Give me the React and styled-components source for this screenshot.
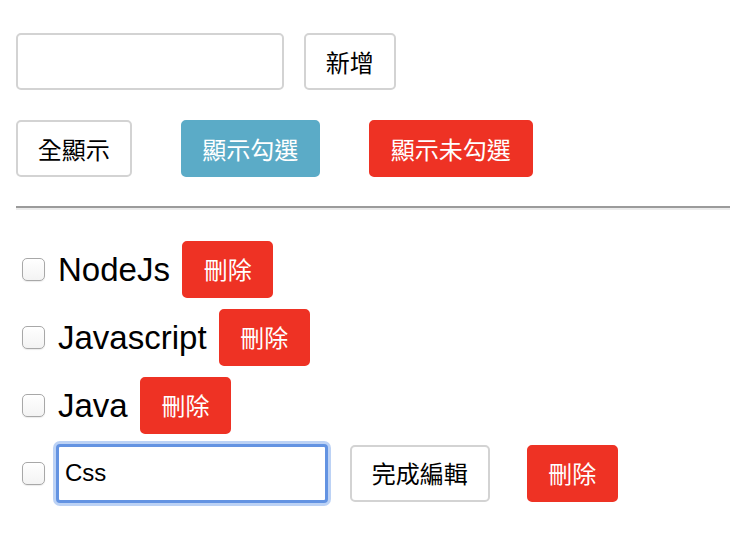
import React, {useState} from 'react'
import styled, {createGlobalStyle} from 'styled-components'

const GlobalStyle = createGlobalStyle`
  body {
    margin: 0;
    background: #fff;
    font-family: "Liberation Sans", "Noto Sans CJK TC", sans-serif;
    color: #000;
  }
`

const Page = styled.div`
  padding: 33px 0 40px 16px;
`

const Toolbar = styled.div`
  display: flex;
  align-items: center;
  gap: ${(p) => p.gap}px;
  margin-bottom: ${(p) => p.mb || 0}px;
`

const TextInput = styled.input`
  box-sizing: border-box;
  width: 268px;
  height: 57px;
  border: 2px solid #d3d3d3;
  border-radius: 5px;
  padding: 0 8px;
  font-size: 24px;
  font-family: "Liberation Sans", "Noto Sans CJK TC", sans-serif;
  outline: none;
`

const EditInput = styled(TextInput)`
  width: 272px;
  height: 59px;
  border: 3px solid #6393e2;
  border-radius: 4px;
  box-shadow: 0 0 0 3px #bcd2f5;
  padding: 0 6px;
  margin-left: 11px;
`

const colors = {
  plain: {bg: '#fff', fg: '#000', border: '#d3d3d3'},
  info: {bg: '#5babc7', fg: '#fff', border: '#5babc7'},
  danger: {bg: '#ee3224', fg: '#fff', border: '#ee3224'},
}

const Button = styled.button`
  box-sizing: border-box;
  height: 57px;
  padding: 0 19.75px;
  border: 2px solid ${(p) => colors[p.kind || 'plain'].border};
  border-radius: 5px;
  background: ${(p) => colors[p.kind || 'plain'].bg};
  color: ${(p) => colors[p.kind || 'plain'].fg};
  font-size: 24px;
  font-family: "Noto Sans CJK TC", sans-serif;
  line-height: 1;
  cursor: pointer;
  margin-left: ${(p) => p.ml || 0}px;
  flex-shrink: 0;
`

const Divider = styled.div`
  height: 2px;
  border-top: 2px solid #9b9b9b;
  background: #ececec;
  margin: 29px 0 30px;
`

const List = styled.ul`
  list-style: none;
  margin: 0;
  padding: 0 0 0 6px;
  display: flex;
  flex-direction: column;
  gap: 10px;
`

const Item = styled.li`
  display: flex;
  align-items: center;
  height: 58px;
`

const Check = styled.input`
  appearance: none;
  box-sizing: border-box;
  width: 23px;
  height: 23px;
  margin: 0;
  border: 1px solid #a8a8a8;
  border-radius: 5px;
  background: linear-gradient(#ffffff, #f3f3f3);
  box-shadow: 0 1px 1px rgba(0, 0, 0, 0.08);
  flex-shrink: 0;
`

const Label = styled.span`
  font-size: 33px;
  margin: 0 12px 0 13px;
  line-height: 1;
`

export default function App() {
  const [items] = useState([
    {name: 'NodeJs'},
    {name: 'Javascript'},
    {name: 'Java'},
    {name: 'Css', editing: true},
  ])

  return (
    <Page>
      <GlobalStyle />
      <Toolbar gap={20} mb={30}>
        <TextInput />
        <Button>新增</Button>
      </Toolbar>
      <Toolbar gap={49}>
        <Button>全顯示</Button>
        <Button kind="info">顯示勾選</Button>
        <Button kind="danger">顯示未勾選</Button>
      </Toolbar>
      <Divider />
      <List>
        {items.map((item) =>
          item.editing ? (
            <Item key={item.name}>
              <Check type="checkbox" />
              <EditInput defaultValue={item.name} />
              <Button ml={22}>完成編輯</Button>
              <Button kind="danger" ml={37}>
                刪除
              </Button>
            </Item>
          ) : (
            <Item key={item.name}>
              <Check type="checkbox" />
              <Label>{item.name}</Label>
              <Button kind="danger">刪除</Button>
            </Item>
          )
        )}
      </List>
    </Page>
  )
}
